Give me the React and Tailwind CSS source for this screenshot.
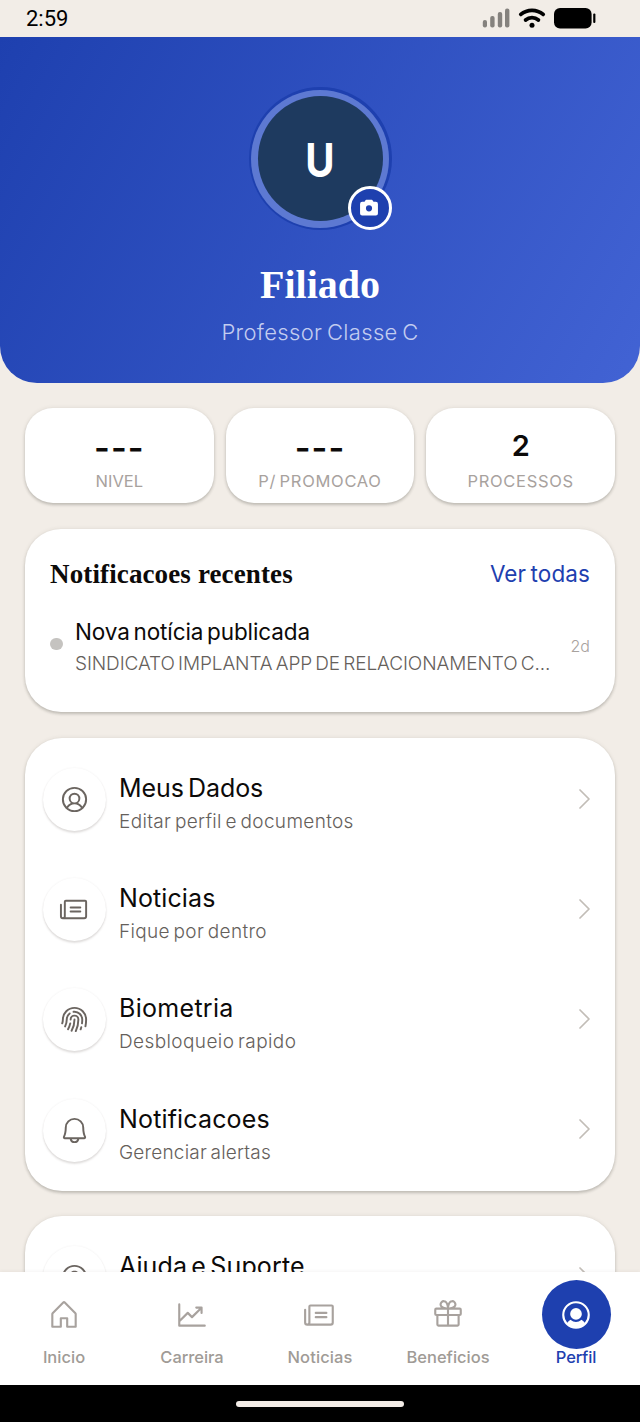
import React from "react";
import {
  PiUserCircle,
  PiUserCircleFill,
  PiNewspaper,
  PiFingerprint,
  PiBell,
  PiQuestion,
  PiHouse,
  PiChartLineUp,
  PiGift,
  PiCameraFill,
} from "react-icons/pi";

const cardShadow =
  "shadow-[0_2px_3px_rgba(60,60,50,0.24),0_0_4px_rgba(60,60,50,0.10)]";

function StatusBar() {
  return (
    <div className="flex h-[37px] shrink-0 items-center justify-between pl-[26px] pr-[44px]">
      <span className="font-[Roboto,sans-serif] text-[22px] leading-none text-black">2:59</span>
      <svg width="114" height="22" viewBox="0 0 114 22" className="-mt-px" fill="#000">
        <g fill="#85827e">
          <rect x="0.8" y="13" width="4.2" height="7.6" rx="2" />
          <rect x="8.2" y="9" width="4.4" height="11.6" rx="2" />
          <rect x="15.8" y="5" width="4.4" height="15.6" rx="2" />
          <rect x="23" y="1.6" width="4.4" height="19" rx="2" />
        </g>
        <g fill="none" stroke="#000" strokeWidth="3.8" strokeLinecap="round">
          <path d="M38.8 7.4a17.4 17.4 0 0 1 22.4 0" />
          <path d="M43.6 13a10 10 0 0 1 12.8 0" />
        </g>
        <circle cx="50" cy="18.2" r="2.5" />
        <rect x="72" y="1" width="37.6" height="20.4" rx="6" />
        <rect x="111.2" y="6.4" width="2.2" height="9.6" rx="1" />
      </svg>
    </div>
  );
}

function ProfileHeader() {
  return (
    <div className="flex h-[346px] shrink-0 flex-col items-center rounded-b-[37px] bg-[linear-gradient(118.4deg,#1e40af_0%,#4263d4_100%)] pt-[50px]">
      <div className="relative flex size-[143px] items-center justify-center rounded-full bg-[#1e40af]">
        <div className="flex size-[138px] items-center justify-center rounded-full bg-[#5d79d2]">
          <div className="flex size-[125px] items-center justify-center rounded-full bg-[#1e3a5f]">
            <span className="mt-[3px] scale-x-[0.87] text-[46px] font-bold leading-none text-white">U</span>
          </div>
        </div>
        <div className="absolute right-0 bottom-0 flex size-[44px] items-center justify-center rounded-full border-[3px] border-white bg-[#1e40af]">
          <PiCameraFill size={22} color="#fff" className="mr-px" />
        </div>
      </div>
      <h1 className="mt-[35px] font-['Liberation_Serif',serif] text-[40px] font-bold leading-[40px] text-white">
        Filiado
      </h1>
      <p className="mt-[16px] text-[22px] font-light leading-[22px] tracking-[0.35px] text-[#c3cdf0] [word-spacing:-2px]">
        Professor Classe C
      </p>
    </div>
  );
}

function Stat({ value, label, valueClass, labelClass }) {
  return (
    <div className={`flex h-[95px] flex-1 flex-col items-center rounded-[28px] bg-white pt-[23px] ${cardShadow}`}>
      <div className={`leading-[30px] text-[#0c0a09] ${valueClass}`}>{value}</div>
      <div className={`mt-[12px] text-[16.5px] leading-[17px] text-[#a8a29e] ${labelClass}`}>{label}</div>
    </div>
  );
}

function Notifications() {
  return (
    <section className={`mt-[26px] h-[183px] rounded-[36px] bg-white px-[25px] pt-[32px] ${cardShadow}`}>
      <div className="flex h-[26px] items-center justify-between">
        <h2 className="font-['Liberation_Serif',serif] text-[27px] font-bold leading-[26px] tracking-[0.13px] text-[#0c0a09]">
          Notificacoes recentes
        </h2>
        <a className="text-[22.5px] font-[420] leading-[22px] tracking-[0.1px] text-[#1e40af] [word-spacing:-2px]">
          Ver todas
        </a>
      </div>
      <div className="mt-[34px] flex items-center">
        <span className="mt-[-6px] size-[12.5px] shrink-0 rounded-full bg-[#c5c3c0]" />
        <div className="ml-[12.5px] flex-1">
          <p className="text-[22.5px] font-[420] leading-[22px] tracking-[-0.1px] text-[#0c0a09] [word-spacing:-2.5px]">
            Nova notícia publicada
          </p>
          <p className="mt-[11px] whitespace-nowrap text-[19px] font-light leading-[19px] tracking-[-0.1px] text-[#65605b] [word-spacing:-2px]">
            SINDICATO IMPLANTA APP DE RELACIONAMENTO C...
          </p>
        </div>
        <span className="mt-[-3px] text-[16px] font-light leading-[16px] text-[#a8a29e]">2d</span>
      </div>
    </section>
  );
}

function MenuRow({ icon: Icon, title, subtitle, titleClass, subtitleClass }) {
  return (
    <div className="flex h-[110.2px] items-center pl-[18px] pr-[25px]">
      <div className="flex size-[63px] items-center justify-center rounded-full bg-white shadow-[0_2px_2px_rgba(80,70,60,0.16),0_0_2px_rgba(80,70,60,0.08)]">
        <Icon size={31} color="#6b6560" />
      </div>
      <div className="ml-[13px] mt-[8px] h-[55px] flex-1">
        <div className={`text-[25px] font-[420] leading-[25px] text-[#0c0a09] [word-spacing:-3px] ${titleClass}`}>
          {title}
        </div>
        {subtitle && (
          <div className={`mt-[11px] text-[19px] font-light leading-[19px] text-[#65605b] [word-spacing:-2px] ${subtitleClass}`}>
            {subtitle}
          </div>
        )}
      </div>
      <svg width="11" height="20" viewBox="0 0 11 20" className="-mt-[2px]" fill="none" stroke="#c2bdb7" strokeWidth="1.7" strokeLinecap="round" strokeLinejoin="round">
        <path d="M1 1l9 9-9 9" />
      </svg>
    </div>
  );
}

function NavItem({ icon: Icon, label, active, labelClass }) {
  return (
    <div className="flex flex-1 flex-col items-center pt-[8px]">
      <div className={`flex size-[69px] items-center justify-center rounded-full ${active ? "bg-[#1e40af]" : ""}`}>
        <Icon size={34} color={active ? "#fff" : "#a8a29e"} />
      </div>
      <div className={`text-[16.5px] font-[450] leading-[17px] ${active ? "text-[#1e40af]" : "text-[#a09b96]"} ${labelClass}`}>
        {label}
      </div>
    </div>
  );
}

export default function App() {
  return (
    <div className="flex h-[1422px] w-[640px] flex-col overflow-hidden bg-[#f2ede7] font-[Inter,sans-serif]">
      <StatusBar />
      <main className="flex h-[1235px] shrink-0 flex-col overflow-hidden">
        <ProfileHeader />
        <div className="px-[25px] pt-[25px]">
          <div className="flex gap-[12px]">
            <Stat value="---" label="NIVEL" valueClass="translate-y-[1.5px] text-[34px] font-semibold tracking-[1px]" labelClass="tracking-[0px]" />
            <Stat value="---" label="P/ PROMOCAO" valueClass="translate-y-[1.5px] text-[34px] font-semibold tracking-[1px]" labelClass="tracking-[0.7px] [word-spacing:-2px]" />
            <Stat value="2" label="PROCESSOS" valueClass="text-[29px] font-semibold" labelClass="tracking-[0.7px]" />
          </div>
          <Notifications />
          <section className={`mt-[26px] h-[452.5px] rounded-[37px] bg-white pt-[6.5px] ${cardShadow}`}>
            <MenuRow icon={PiUserCircle} title="Meus Dados" subtitle="Editar perfil e documentos" titleClass="-tracking-[0.05px]" subtitleClass="tracking-[0.33px]" />
            <MenuRow icon={PiNewspaper} title="Noticias" subtitle="Fique por dentro" titleClass="tracking-[0.1px]" subtitleClass="tracking-[0.33px]" />
            <MenuRow icon={PiFingerprint} title="Biometria" subtitle="Desbloqueio rapido" titleClass="tracking-[0.3px]" subtitleClass="tracking-[0.4px]" />
            <MenuRow icon={PiBell} title="Notificacoes" subtitle="Gerenciar alertas" titleClass="tracking-[0.15px]" subtitleClass="tracking-[0.2px]" />
          </section>
          <section className={`mt-[25.5px] h-[240px] rounded-[37px] bg-white pt-[6.5px] ${cardShadow}`}>
            <MenuRow icon={PiQuestion} title="Ajuda e Suporte" titleClass="tracking-[0.15px]" />
          </section>
        </div>
      </main>
      <nav className="relative flex h-[112.5px] shrink-0 bg-white shadow-[0_-1px_3px_rgba(80,70,60,0.06)]">
        <NavItem icon={PiHouse} label="Inicio" labelClass="tracking-[0px]" />
        <NavItem icon={PiChartLineUp} label="Carreira" labelClass="-tracking-[0.05px]" />
        <NavItem icon={PiNewspaper} label="Noticias" labelClass="tracking-[0.1px]" />
        <NavItem icon={PiGift} label="Beneficios" labelClass="tracking-[0px]" />
        <NavItem icon={PiUserCircleFill} label="Perfil" active labelClass="-tracking-[0.2px]" />
      </nav>
      <div className="flex flex-1 justify-center bg-black pt-[16px]">
        <div className="h-[6px] w-[168px] rounded-full bg-[#f3ece7]" />
      </div>
    </div>
  );
}
